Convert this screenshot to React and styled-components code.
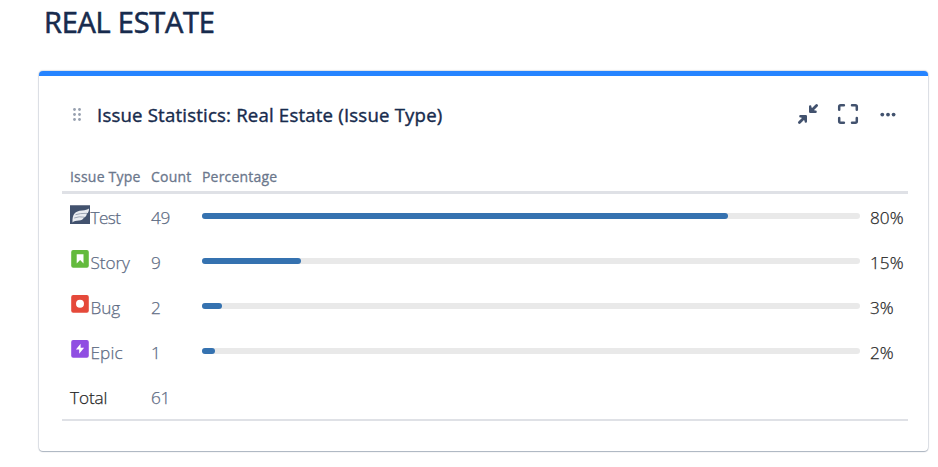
import React from "react";
import styled, { createGlobalStyle } from "styled-components";

const GlobalStyle = createGlobalStyle`
  * { box-sizing: border-box; }
  body {
    margin: 0;
    background: #fff;
    font-family: "Segoe UI", "Open Sans", "Noto Sans", sans-serif;
    overflow: hidden;
  }
`;

const Page = styled.main`
  width: 938px;
  height: 467px;
  padding: 0 10px 0 39px;
`;

const Title = styled.h1`
  margin: 0;
  height: 71px;
  padding: 2px 0 0 5px;
  font-size: 29px;
  line-height: 40px;
  font-weight: 400;
  -webkit-text-stroke: 0.6px #172b4d;
  letter-spacing: -0.25px;
  color: #172b4d;
`;

const Card = styled.section`
  height: 380px;
  background: #fff;
  border-radius: 4px;
  border-top: 5px solid #2684ff;
  box-shadow: 0 1px 1px rgba(9, 30, 66, 0.25), 0 0 1px 1px rgba(9, 30, 66, 0.13);
  padding: 20px 20px 0 23px;
`;

const CardHeader = styled.header`
  display: flex;
  align-items: center;
  height: 37px;
  padding-left: 10px;
`;

const CardTitle = styled.h2`
  flex: 1;
  margin: 0 0 0 15px;
  font-size: 18.6px;
  line-height: 26px;
  font-weight: 400;
  -webkit-text-stroke: 0.4px #172b4d;
  letter-spacing: 0.19px;
  color: #172b4d;
  white-space: nowrap;
`;

const Actions = styled.div`
  display: flex;
  align-items: center;
  gap: 10px;
  padding: 0 5px 2px 0;
`;

const IconButton = styled.button`
  display: flex;
  width: 30px;
  height: 30px;
  padding: 0;
  border: 0;
  background: none;
  color: #42526e;
`;

const Table = styled.div`
  margin-top: 34px;
  border-bottom: 2px solid #dfe1e6;
`;

const Row = styled.div`
  display: grid;
  grid-template-columns: 81px 51px 1fr 40px;
  height: 45px;
  padding-left: 8px;
  font-size: 17.2px;
  line-height: 24px;
  font-weight: 300;
  -webkit-text-stroke: 0.25px currentColor;
  color: #5e6c84;
`;

const HeadRow = styled(Row)`
  height: 27px;
  border-bottom: 3px solid #dfe1e6;
  font-size: 14px;
  line-height: 20px;
  font-weight: 400;
  -webkit-text-stroke: 0.3px currentColor;
  color: #6b778c;
`;

const HeadCell = styled.div`
  white-space: nowrap;
  letter-spacing: 0.2px;
`;

const TypeCell = styled.div`
  display: flex;
  align-items: flex-start;
  color: ${(p) => (p.$dark ? "#292929" : "inherit")};
  svg { margin: 11px 0.5px 0 0; flex: none; }
`;

const Label = styled.span`
  padding-top: 12px;
  letter-spacing: ${(p) => p.$spacing || 0}px;
`;

const Count = styled.div`
  padding-top: 12px;
  letter-spacing: -0.4px;
`;

const Track = styled.div`
  height: 6px;
  margin: 19px 8px 0 0;
  border-radius: 3px;
  background: #e9e9e9;
`;

const Fill = styled.div`
  height: 6px;
  border-radius: 3px;
  background: #3572b0;
`;

const Percent = styled.div`
  padding: 12px 0 0 2px;
  letter-spacing: 0;
  color: #292929;
`;

const DragHandle = () => (
  <svg width="10" height="14" viewBox="0 0 10 14" fill="#97a0af">
    {[1.5, 6.5, 11.5].map((y) => (
      <React.Fragment key={y}>
        <circle cx="2.5" cy={y} r="1.4" />
        <circle cx="7.5" cy={y} r="1.4" />
      </React.Fragment>
    ))}
  </svg>
);

const CollapseIcon = () => (
  <svg width="30" height="30" viewBox="0 0 30 30" fill="none" stroke="currentColor" strokeWidth="2.8" strokeLinecap="round" strokeLinejoin="round">
    <path d="M23.600 6.400 18 12M6.400 23.600l5.600-5.600" />
    <path d="M17 7v6h6zM7 17h6v6z" fill="currentColor" stroke="none" />
    <path d="M17.200 7.400v5.400h5.400M7.400 17.200h5.400v5.400" strokeWidth="2.400" />
  </svg>
);

const ExpandIcon = () => (
  <svg width="30" height="30" viewBox="0 0 30 30" fill="none" stroke="currentColor" strokeWidth="2.5" strokeLinecap="round" strokeLinejoin="round">
    <path d="M6.200 10.700V7.700a1.500 1.500 0 0 1 1.500-1.500h3.200M19 6.200h3.300a1.500 1.500 0 0 1 1.500 1.500v3M23.800 19v3.300a1.500 1.500 0 0 1-1.500 1.500H19M10.900 23.800H7.700a1.500 1.500 0 0 1-1.500-1.500V19" />
  </svg>
);

const MoreIcon = () => (
  <svg width="30" height="30" viewBox="0 0 30 30" fill="currentColor">
    <circle cx="9.300" cy="15.600" r="1.900" />
    <circle cx="15" cy="15.600" r="1.900" />
    <circle cx="20.600" cy="15.600" r="1.900" />
  </svg>
);

const TestIcon = () => (
  <svg width="20" height="20" viewBox="0 0 20 20">
    <path d="M0 0h20v19H0z" fill="#42526e" />
    <path d="M0 0h20v.7H0z" fill="#8790a1" />
    <path d="M2.500 17.500C2.300 9 5 6 12 5.500 15.500 5.200 17.500 4.600 19 3.500 19 6.500 18.300 7.800 16.800 8.600 16.800 10.800 15.600 12 14 12.500 13 14.600 11.500 15.300 9 15.500 6 15.800 4 16 2.500 17.500z" fill="#e9ecf1" />
    <path d="M5.500 9.700Q10 8.200 17 8.300M4.200 13Q9 11 14.500 12.200" stroke="#8993a4" strokeWidth=".8" fill="none" />
  </svg>
);

const glyphs = {
  Story: <path d="M6.700 4.200h6.800v9.200l-3.400-3.300-3.400 3.300z" fill="#fff" />,
  Bug: <circle cx="10" cy="8.700" r="4" fill="#fff" />,
  Epic: <path d="M10.600 3.700 5.900 9.500h3.300v4.300l4.900-6h-3.500z" fill="#fff" />,
};

const TypeIcon = ({ type, color }) =>
  type === "Test" ? (
    <TestIcon />
  ) : (
    <svg width="20" height="20" viewBox="0 0 20 20">
      <rect x="1.200" y="0.100" width="17.600" height="17.600" rx="2" fill={color} />
      {glyphs[type]}
    </svg>
  );

const rows = [
  { type: "Test", count: 49, percent: 80, spacing: -0.6 },
  { type: "Story", count: 9, percent: 15, color: "#63ba3c", spacing: -0.1 },
  { type: "Bug", count: 2, percent: 3, color: "#e5493a", spacing: -0.1 },
  { type: "Epic", count: 1, percent: 2, color: "#904ee2", spacing: 0.1 },
];

export default function App() {
  return (
    <Page>
      <GlobalStyle />
      <Title>REAL ESTATE</Title>
      <Card>
        <CardHeader>
          <DragHandle />
          <CardTitle>Issue Statistics: Real Estate (Issue Type)</CardTitle>
          <Actions>
            <IconButton aria-label="Minimize"><CollapseIcon /></IconButton>
            <IconButton aria-label="Maximize"><ExpandIcon /></IconButton>
            <IconButton aria-label="More"><MoreIcon /></IconButton>
          </Actions>
        </CardHeader>
        <Table>
          <HeadRow>
            <HeadCell>Issue Type</HeadCell>
            <HeadCell>Count</HeadCell>
            <HeadCell>Percentage</HeadCell>
          </HeadRow>
          {rows.map((r) => (
            <Row key={r.type}>
              <TypeCell>
                <TypeIcon type={r.type} color={r.color} />
                <Label $spacing={r.spacing}>{r.type}</Label>
              </TypeCell>
              <Count>{r.count}</Count>
              <Track><Fill style={{ width: `${r.percent}%` }} /></Track>
              <Percent>{r.percent}%</Percent>
            </Row>
          ))}
          <Row>
            <TypeCell $dark><Label $spacing={-0.1}>Total</Label></TypeCell>
            <Count>61</Count>
          </Row>
        </Table>
      </Card>
    </Page>
  );
}
